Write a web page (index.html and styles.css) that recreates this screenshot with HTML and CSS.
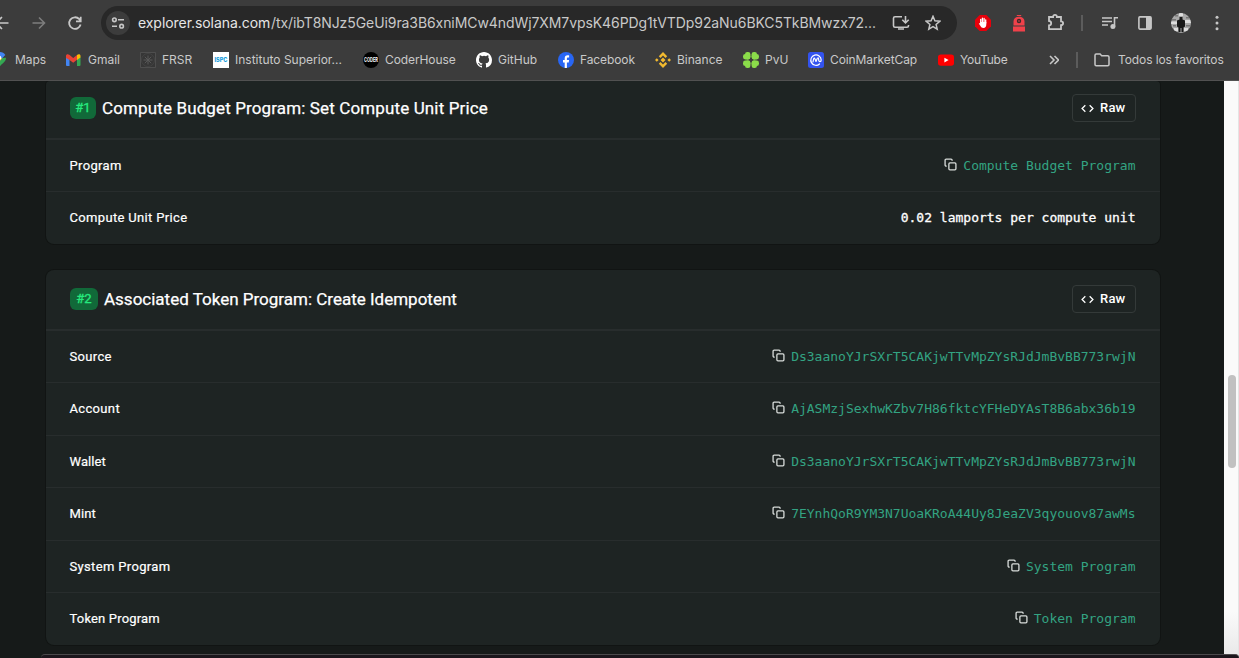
FILE: index.html
```
<!DOCTYPE html>
<html lang="es">
<head>
<meta charset="utf-8">
<title>Solana Explorer</title>
<link rel="stylesheet" href="styles.css">
</head>
<body>
<svg class="defs" width="0" height="0">
  <symbol id="copy" viewBox="0 0 24 24"><path d="M5 15H4a2 2 0 0 1-2-2V4a2 2 0 0 1 2-2h9a2 2 0 0 1 2 2v1" /><rect x="9" y="9" width="13" height="13" rx="2" /></symbol>
  <symbol id="code" viewBox="0 0 24 24"><path d="M8 6l-6 6 6 6M16 6l6 6-6 6" /></symbol>
</svg>
<header class="browser">
  <div class="toolbar">
    <svg class="nav back" viewBox="0 0 16 16"><path d="M14.500 8H2M8 2L2 8l6 6" /></svg>
    <svg class="nav forward" viewBox="0 0 16 16"><path d="M1.500 8h12M8 2.500L13.500 8 8 13.500" /></svg>
    <svg class="nav reload" viewBox="0 0 16 16"><path d="M13.600 9.500A5.800 5.800 0 1 1 12.300 4.200l1.400 1.600M13.700 1.700v4.700H9" /></svg>
    <div class="omnibox">
      <span class="site"><svg width="14" height="12" viewBox="0 0 14 12"><circle cx="3.400" cy="2.800" r="1.800" /><path d="M7 2.800h6M1 9.200h5" /><circle cx="10.600" cy="9.200" r="1.800" /></svg></span>
      <span class="url"><b>explorer.solana.com</b><span>/tx/ibT8NJz5GeUi9ra3B6xniMCw4ndWj7XM7vpsK46PDg1tVTDp92aNu6BKC5TkBMwzx72...</span></span>
      <svg class="install" viewBox="0 0 18 16"><path d="M10 1.800H3A1.500 1.500 0 0 0 1.500 3.300v7.400A1.500 1.500 0 0 0 3 12.200h12a1.500 1.500 0 0 0 1.500-1.500V10M13.500 1v6.500M10.300 4.800l3.200 3.100 3.200-3.100M6 14h6" /></svg>
      <svg class="star" viewBox="0 0 16 16"><path d="M8 1.300l1.900 4.500 4.900.4-3.700 3.200 1.100 4.800L8 11.700l-4.200 2.500 1.100-4.800L1.200 6.200l4.900-.4z" /></svg>
    </div>
    <svg class="ext e1" viewBox="0 0 16 16"><path fill="#e8000b" d="M4.700 0h6.600L16 4.700v6.600L11.300 16H4.700L0 11.300V4.700z" /><path fill="none" stroke="#fff" stroke-width="1.300" stroke-linecap="round" d="M5.700 8V4.300M7.400 7.500V3.200M9.100 7.500V3.500M10.700 8V4.800" /><path fill="#fff" d="M5.100 7h6.200v2.600c0 2-1 3.400-2.800 3.400-1.600 0-2.300-.8-3.200-2.200L3.800 8.600c.4-.6 1-.4 1.300 0z" /></svg>
    <svg class="ext e2" viewBox="0 0 14 17"><path fill="#f0414a" d="M1.500 10.500V6.500C1.500 3.500 3.800 1.700 7 1.700s5.500 1.800 5.500 4.800v4zM1 11.500h12v5H1zM4.800 0h4.400v1H4.800z" /><circle cx="7" cy="6" r="2.200" fill="#3b2a2b" /><circle cx="7" cy="6" r=".8" fill="#f0414a" /></svg>
    <svg class="ext e3" viewBox="0 0 18 18"><path d="M2 4h4.100c-.2-2.900 4-2.900 3.800 0H14v4.400c2.800 0 2.800 3.800 0 3.800V16.200H2v-3.800c2.900-.2 2.900-4.200 0-4.400z" /></svg>
    <i class="sep"></i>
    <svg class="ext e4" viewBox="0 0 18 14"><path d="M1 2h10M1 5.500h10M1 9h6M13.500 10.500V1.800H17" /><circle class="solid" cx="11.900" cy="10.600" r="2.500" /></svg>
    <svg class="ext e5" viewBox="0 0 16 16"><rect x="1.900" y="1.900" width="12.200" height="12.200" rx="1" /><path class="solid" d="M9 2h5v12H9z" /></svg>
    <svg class="ext e6" viewBox="0 0 20 20"><defs><clipPath id="face"><circle cx="10" cy="10" r="10" /></clipPath></defs><g clip-path="url(#face)"><path fill="#a9a9a9" d="M0 0h20v20H0z" /><path fill="#777" d="M1 6h4v1.500H1zM15 4h4v1.500h-4zM2 12h3v1.500H2zM15 12h4v1.500h-4zM4 2h3v1.500H4z" /><path fill="#ddd" d="M0 8.500h6v2.500H0zM14 7h6v3h-6zM3 15h4v3H3zM13 15h4v3h-4zM8 0h4v3H8z" /><path fill="#181818" d="M8.500 4h3v2.500l2.500 1v6l-1.500 1V19h-2v-4h-1v4h-2v-4.500L6 13.500v-6l2.500-1z" /></g></svg>
    <svg class="ext e7" viewBox="0 0 4 16"><circle cx="2" cy="2.300" r="1.500" /><circle cx="2" cy="8" r="1.500" /><circle cx="2" cy="13.700" r="1.500" /></svg>
  </div>
  <nav class="bookmarks">
    <a class="maps"><svg viewBox="0 0 16 16"><path fill="#34a853" d="M3.500 9.500C5.500 12 8 12.500 9 16c1-3.700 7-5.300 7-10.300L9 6z" /><path fill="#4285f4" d="M4 2.200C7 -1 13.500-.600 15.300 3L9.500 9z" /><path fill="#fbbc04" d="M3.300 9.200L9 4l3 2.500-5.500 6z" /><circle cx="9.200" cy="5.700" r="2.100" fill="#fff" /></svg><span>Maps</span></a>
    <a><svg viewBox="0 0 16 16"><path fill="#4285f4" d="M1 5L4.500 7v7H2a1 1 0 0 1-1-1z" /><path fill="#34a853" d="M12 7l3.500-2v8a1 1 0 0 1-1 1H12z" /><path fill="#ea4335" d="M1 6V4c0-2 2-2.200 3.300-1.200L8.200 6l4.200-3.200L12 7.800l-3.800 3-4-3z" /><path fill="#fbbc04" d="M12 3c1.500-1.200 3.500-1 3.500 1v1.500L12 8z" /></svg><span class="gmail">Gmail</span></a>
    <a><svg viewBox="0 0 16 16"><path fill="#363636" stroke="#545454" stroke-width=".8" d="M.5.5h15v15H.5z" /><path fill="none" stroke="#585858" stroke-width="1" d="M8 3.500v9M3.500 8h9M4.800 4.800l6.400 6.400M11.200 4.800l-6.400 6.400" /><circle cx="8" cy="8" r="6.500" fill="none" stroke="#4c4c4c" stroke-width=".6" /></svg><span>FRSR</span></a>
    <a><svg viewBox="0 0 16 16"><path fill="#fff" d="M0 0h16v16H0z" /><text x="1.500" y="10.400" class="ispc" textLength="13" lengthAdjust="spacingAndGlyphs">ISPC</text></svg><span class="inst">Instituto Superior...</span></a>
    <a><svg viewBox="0 0 16 16"><circle cx="8" cy="8" r="8" fill="#000" /><text x="1" y="10.400" class="coder" textLength="14" lengthAdjust="spacingAndGlyphs">CODER</text></svg><span class="tight">CoderHouse</span></a>
    <a><svg viewBox="0 0 16 16"><path fill="#fff" d="M8 0C3.580 0 0 3.580 0 8c0 3.540 2.290 6.530 5.470 7.590.4.070.55-.17.55-.38 0-.19-.01-.82-.01-1.490-2.010.37-2.530-.49-2.690-.94-.09-.23-.48-.94-.82-1.130-.28-.15-.68-.52-.01-.53.63-.01 1.080.58 1.230.82.72 1.210 1.870.87 2.330.66.07-.52.28-.87.51-1.070-1.780-.2-3.640-.89-3.640-3.950 0-.87.31-1.590.82-2.150-.08-.2-.36-1.020.08-2.120 0 0 .67-.21 2.200.82a7.600 7.600 0 0 1 4 0c1.530-1.040 2.200-.82 2.200-.82.44 1.100.16 1.920.08 2.120.51.56.82 1.270.82 2.150 0 3.070-1.870 3.750-3.650 3.950.29.25.54.73.54 1.480 0 1.070-.01 1.930-.01 2.200 0 .21.15.46.55.38A8 8 0 0 0 16 8c0-4.420-3.580-8-8-8z" /></svg><span>GitHub</span></a>
    <a><svg viewBox="0 0 16 16"><circle cx="8" cy="8" r="8" fill="#2866f4" /><path fill="#fff" d="M6.700 16v-5.600H5V8h1.700V6.500c0-2.200 1.100-3.200 3-3.200.6 0 1 0 1.400.1v2.100h-1c-.9 0-1.200.4-1.200 1.200V8h2.200l-.4 2.400H8.900V16z" /></svg><span class="tight">Facebook</span></a>
    <a><svg viewBox="0 0 16 16"><g fill="#f3ba2f"><path d="M8 0l4.200 4.200-1.700 1.700L8 3.400 5.500 5.900 3.800 4.200zM8 16l4.200-4.200-1.700-1.700L8 12.600l-2.500-2.500-1.700 1.700zM1.800 6.200L3.600 8 1.800 9.800 0 8zM14.200 6.200L16 8l-1.800 1.800L12.400 8zM8 5.500L10.500 8 8 10.500 5.500 8z" /></g></svg><span>Binance</span></a>
    <a><svg viewBox="0 0 16 16"><g fill="#8bdc4a"><rect x="2" width="5.400" height="7.400" rx="2.300" /><rect y="2" width="7.400" height="5.400" rx="2.300" /><rect x="8.600" width="5.400" height="7.400" rx="2.300" /><rect x="8.600" y="2" width="7.400" height="5.400" rx="2.300" /><rect x="2" y="8.600" width="5.400" height="7.400" rx="2.300" /><rect y="8.600" width="7.400" height="5.400" rx="2.300" /><rect x="8.600" y="8.600" width="5.400" height="7.400" rx="2.300" /><rect x="8.600" y="8.600" width="7.400" height="5.400" rx="2.300" /></g></svg><span>PvU</span></a>
    <a><svg viewBox="0 0 16 16"><rect width="16" height="16" rx="2.500" fill="#3353ef" /><path fill="none" stroke="#fff" stroke-width="1.200" stroke-linecap="round" stroke-linejoin="round" d="M11.500 12A5.200 5.200 0 1 1 13.200 8c0 2.100-2.500 2.100-2.500 0 0-3-1-2.600-1.700-1L8 9.500 7 7C6.500 5.500 5.800 6 5.600 7L5 9.800" /></svg><span class="tight">CoinMarketCap</span></a>
    <a><svg viewBox="0 0 16 16"><rect y="2.400" width="16" height="11.400" rx="2.800" fill="#f00" /><path fill="#fff" d="M6.400 5.700l4.200 2.400-4.200 2.400z" /></svg><span class="yt">YouTube</span></a>
    <svg class="more" viewBox="0 0 10 10"><path d="M1 1l4 4-4 4M5.500 1l4 4-4 4" /></svg>
    <i class="sep"></i>
    <a class="all"><svg viewBox="0 0 16 16"><path class="folder" d="M1 3.300c0-.7.500-1.200 1.200-1.200h3.900l1.600 1.700h6c.7 0 1.300.5 1.300 1.200v7.500c0 .7-.6 1.200-1.300 1.200H2.200c-.7 0-1.200-.5-1.200-1.200z" /></svg><span class="tight">Todos los favoritos</span></a>
  </nav>
</header>
<div class="viewport">
  <main>
    <section class="card first">
      <header><span class="badge">#1</span><h3 class="t1">Compute Budget Program: Set Compute Unit Price</h3><button><svg><use href="#code" /></svg>Raw</button></header>
      <div class="row"><span class="w3">Program</span><a><svg><use href="#copy" /></svg>Compute Budget Program</a></div>
      <div class="row"><span class="w3">Compute Unit Price</span><code>0.02 lamports per compute unit</code></div>
    </section>
    <section class="card">
      <header><span class="badge two">#2</span><h3 class="t2">Associated Token Program: Create Idempotent</h3><button><svg><use href="#code" /></svg>Raw</button></header>
      <div class="row"><span class="w3">Source</span><a><svg><use href="#copy" /></svg>Ds3aanoYJrSXrT5CAKjwTTvMpZYsRJdJmBvBB773rwjN</a></div>
      <div class="row raised"><span class="w3">Account</span><a><svg><use href="#copy" /></svg>AjASMzjSexhwKZbv7H86fktcYFHeDYAsT8B6abx36b19</a></div>
      <div class="row"><span>Wallet</span><a><svg><use href="#copy" /></svg>Ds3aanoYJrSXrT5CAKjwTTvMpZYsRJdJmBvBB773rwjN</a></div>
      <div class="row"><span>Mint</span><a><svg><use href="#copy" /></svg>7EYnhQoR9YM3N7UoaKRoA44Uy8JeaZV3qyouov87awMs</a></div>
      <div class="row"><span class="w3">System Program</span><a><svg><use href="#copy" /></svg>System Program</a></div>
      <div class="row"><span class="w2">Token Program</span><a><svg><use href="#copy" /></svg>Token Program</a></div>
    </section>
  </main>
  <aside class="track"><i class="thumb"></i></aside>
</div>
<div class="dock"></div>
</body>
</html>
```
FILE: styles.css
```
* { box-sizing: border-box; }
body {
  margin: 0; width: 1239px; height: 658px; overflow: hidden; position: relative;
  background: #161a19; color: #fff; font-family: Roboto, sans-serif;
}
.defs { position: absolute; }
svg { display: block; flex: none; }

/* Browser chrome */
.browser { position: relative; z-index: 1; height: 81px; background: #3c3c3c; border-bottom: 1px solid #515151; color: #c9c9c9; font-family: Inter, sans-serif; }
.toolbar { display: flex; align-items: center; height: 46px; }
.toolbar svg, .more, .folder { fill: none; stroke: #c7c7c7; stroke-width: 1.6; }
.nav { width: 16px; height: 16px; }
.back { margin-left: -6px; }
.forward { margin-left: 21px; }
.toolbar .forward { stroke: #7d7d7d; }
.reload { margin-left: 20px; }
.toolbar .reload { stroke-width: 1.8; }
.omnibox { display: flex; align-items: center; width: 856px; height: 34px; margin-left: 18px; padding-left: 5px; border-radius: 17px; background: #282828; }
.site { display: grid; place-items: center; width: 24px; height: 24px; border-radius: 50%; background: #3c3c3c; }
.url { display: flex; width: 754px; margin-left: 8px; font-size: 14px; line-height: 20px; white-space: nowrap; }
.url b { font-weight: 400; color: #e6e6e6; width: 133px; letter-spacing: -.06px; }
.url span { letter-spacing: -.08px; }
.install { width: 18px; height: 16px; }
.star { width: 16px; height: 16px; margin-left: 15px; }
.toolbar .star { stroke-width: 1.5; }
.toolbar .e1, .toolbar .e2, .toolbar .e6 { stroke: none; }
.e1 { width: 16px; height: 16px; margin-left: 18px; }
.e2 { width: 14px; height: 17px; margin-left: 21px; }
.e3 { width: 18px; height: 18px; margin: -2px -1px 0 21px; }
.toolbar .e3 { stroke-width: 1.8; }
.sep { width: 2px; height: 16px; background: #5c5c5c; }
.toolbar .sep { margin-left: 17px; }
.e4 { width: 18px; height: 14px; margin-left: 18px; }
.e5 { width: 16px; height: 16px; margin-left: 18px; }
.toolbar .solid { fill: #c7c7c7; stroke: none; }
.e6 { width: 20px; height: 20px; margin-left: 18px; }
.e7 { width: 4px; height: 16px; margin-left: 24px; }
.toolbar .e7 { fill: #c7c7c7; stroke: none; }
.bookmarks {
  display: grid; align-items: center; height: 28px; font-size: 12px; white-space: nowrap;
  grid-template-columns: 65px 75px 73px 150px 113px 82px 97px 88px 65px 130px 111px 27px 17px 146px;
}
.bookmarks a { display: flex; align-items: center; gap: 6px; }
.bookmarks a span { margin-top: -2px; }
.bookmarks a svg { width: 16px; height: 16px; }
.bookmarks .maps { margin-left: -10px; gap: 9px; }
.maps span { letter-spacing: -.1px; }
.bookmarks .gmail { margin-left: 1px; }
.tight { letter-spacing: -.1px; }
.yt { letter-spacing: -.25px; }
.ispc { font: 800 6px Inter, sans-serif; fill: #139ddb; }
.coder { font: 700 6px Inter, sans-serif; fill: #fff; }
.more { width: 10px; height: 10px; }
.bookmarks .all { gap: 8px; margin-left: 1px; }
.folder { stroke-width: 1.5; }

/* Page */
.viewport { display: flex; height: 577px; }
main { width: 1224px; padding-left: 46px; }
.card { width: 1114px; background: #1e2423; border-radius: 8px; box-shadow: 0 0 0 1px #111413; }
.first { border-radius: 4px 4px 8px 8px; margin-bottom: 26px; }
.card header { display: flex; align-items: center; height: 61px; padding: 0 24px; border-bottom: 2px solid #282d2d; }
.first header { height: 59px; padding-bottom: 3px; }
.badge { width: 26px; height: 22px; border-radius: 6px; background: #116939; color: #26e97e; font-size: 13px; line-height: 21px; text-align: center; -webkit-text-stroke: .3px; }
.two { width: 28px; }
h3 { margin: 0 0 0 6px; font-size: 17px; font-weight: 400; line-height: 22px; white-space: nowrap; -webkit-text-stroke: .25px; }
.t1 { letter-spacing: .13px; }
button {
  display: flex; align-items: center; gap: 6px; width: 64px; height: 28px; margin-left: auto; padding: 0 0 1px 8px;
  border: 1px solid #343a39; border-radius: 4px; background: none; color: #fff; font: 500 13px Roboto, sans-serif; letter-spacing: .2px;
}
button svg { width: 13px; height: 13px; margin-top: 1px; fill: none; stroke: currentColor; stroke-width: 2.4; }
.row { display: flex; align-items: center; justify-content: space-between; height: 52.4px; padding: 0 24.500px 0 23.500px; border-bottom: 1px solid #282d2d; font-size: 13px; }
.row.raised { padding-bottom: 1px; }
.row:last-child { border-bottom: 0; padding-bottom: 1.500px; }
.first .row:last-child { height: 51.6px; }
.row span { letter-spacing: .1px; -webkit-text-stroke: .2px; }
.row .w3 { letter-spacing: .34px; }
.row .w2 { letter-spacing: .17px; }
.row a, code { display: flex; align-items: center; gap: 6px; font: 13px "DejaVu Sans Mono", monospace; }
.row a { color: #33a382; }
.row a svg { width: 13px; height: 13px; margin-top: -2px; fill: none; stroke: #d8dcda; stroke-width: 2.4; }
code { -webkit-text-stroke: .3px; }
.track { width: 15px; background: linear-gradient(#fafafa 92%, #e8e8e8); border-right: 1px solid #e4e4e4; padding: 294px 0 0 4px; }
.thumb { display: block; width: 8px; height: 93px; border-radius: 4px; background: #c1c1c1; }
.dock { position: absolute; left: 41px; top: 654px; width: 1198px; height: 4px; background: #1b161c; border-top: 1px solid #4b494b; border-radius: 4px 4px 0 0; }
```
